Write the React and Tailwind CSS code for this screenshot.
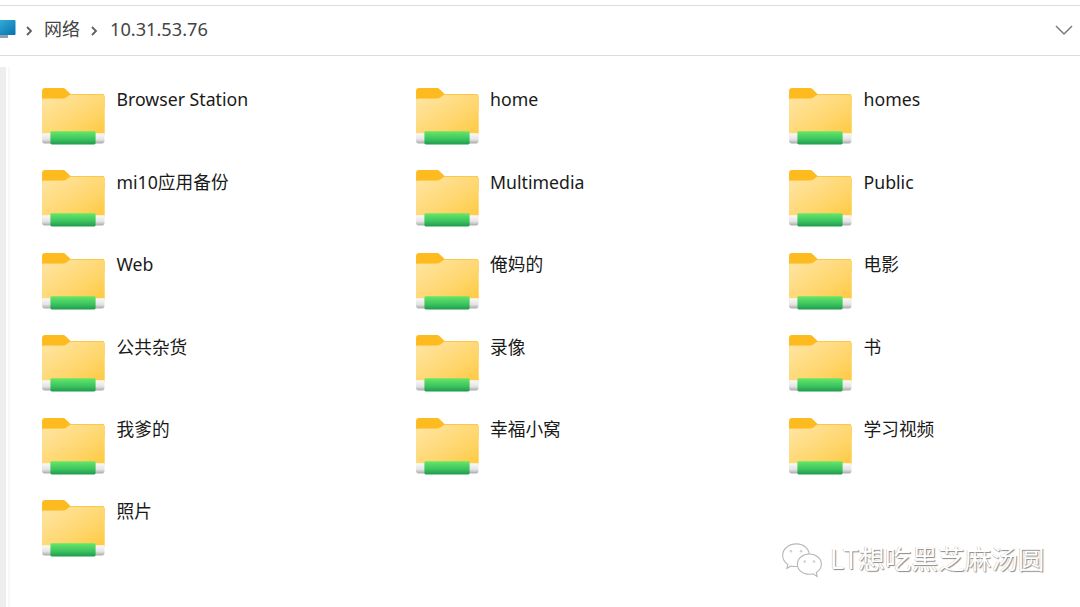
import React from 'react';

const folders = [
  'Browser Station', 'home', 'homes',
  'mi10应用备份', 'Multimedia', 'Public',
  'Web', '俺妈的', '电影',
  '公共杂货', '录像', '书',
  '我爹的', '幸福小窝', '学习视频',
  '照片',
];

const Folder = () => (
  <svg width="63" height="57" viewBox="0 0 64 58" className="shrink-0">
    <defs>
      <linearGradient id="body" x1="0" y1="0" x2="1" y2="1">
        <stop offset="0" stopColor="#ffe6a6" />
        <stop offset="0.65" stopColor="#ffd569" />
        <stop offset="1" stopColor="#fdc93f" />
      </linearGradient>
      <linearGradient id="green" x1="0" y1="0" x2="0" y2="1">
        <stop offset="0" stopColor="#66e868" />
        <stop offset="0.6" stopColor="#3cc35f" />
        <stop offset="1" stopColor="#1f9a4d" />
      </linearGradient>
      <linearGradient id="silver" x1="0" y1="0" x2="0" y2="1">
        <stop offset="0" stopColor="#fafafa" />
        <stop offset="0.6" stopColor="#e4e4e4" />
        <stop offset="1" stopColor="#a9a9a9" />
      </linearGradient>
    </defs>
    <path d="M0 3a3 3 0 0 1 3-3h18a4 4 0 0 1 3 1.200L29 6H61a2.500 2.500 0 0 1 2.500 2.500V20H0Z" fill="#fdbb1f" />
    <path d="M0 12a1.500 1.500 0 0 1 1.500-1.500H21c2.500 0 4-1 5.500-2.500L29 6H61a2.500 2.500 0 0 1 2.500 2.500V46H0Z" fill="#fdc84a" />
    <path d="M0 12.500a1.500 1.500 0 0 1 1.500-1.500H21c2.500 0 4-1 5.500-2.500L28.500 7H61a2.500 2.500 0 0 1 2.500 2.500V48H0Z" fill="url(#body)" />
    <path d="M0 46h63.500v8.500a2.500 2.500 0 0 1-2.500 2H2.500a2.500 2.500 0 0 1-2.500-2Z" fill="url(#silver)" />
    <rect x="8.500" y="44" width="46" height="13.500" rx="1.500" fill="url(#green)" />
  </svg>
);

const Chevron = () => (
  <svg width="8" height="12" viewBox="0 0 8 12" className="shrink-0">
    <path d="M2 2l4 4-4 4" fill="none" stroke="#5f5f5f" strokeWidth="1.800" />
  </svg>
);

const WeChat = () => (
  <svg width="42" height="35" viewBox="0 0 44 38" fill="#ffffff" stroke="#b8b8b8" strokeWidth="1.200">
    <path d="M16 1C7.500 1 1 6.500 1 13.500c0 4 2.200 7.400 5.700 9.700L5.500 27.500l5-2.600c1.500.4 3 .6 4.500.6 9 0 15-5.500 15-12S24.500 1 16 1Z" />
    <path d="M30 12c-7.500 0-13 4.900-13 11s5.500 11 13 11c1.400 0 2.800-.2 4-.6l4.500 3-1-4.400c3.400-2.100 5.500-5.300 5.500-9 0-6.100-5.500-11-13-11Z" />
    <circle cx="10" cy="9" r="1.400" fill="#d0d0d0" stroke="none" />
    <circle cx="21" cy="9" r="1.400" fill="#d0d0d0" stroke="none" />
    <circle cx="25" cy="20" r="1.400" fill="#d0d0d0" stroke="none" />
    <circle cx="35" cy="20" r="1.400" fill="#d0d0d0" stroke="none" />
  </svg>
);

export default function App() {
  return (
    <div className="relative w-[1080px] h-[607px] overflow-hidden bg-white text-[#1a1a1a] font-['Noto_Sans','Noto_Sans_CJK_SC',sans-serif]">
      <div className="mt-[5px] h-[51px] border-y border-[#dcdcdc] flex items-center">
        <svg width="16" height="18" viewBox="0 0 16 18" className="shrink-0 -mt-[3px]">
          <defs>
            <linearGradient id="screen" x1="0" y1="0" x2="1" y2="1">
              <stop offset="0" stopColor="#35b4d8" />
              <stop offset="1" stopColor="#0a6fb0" />
            </linearGradient>
          </defs>
          <rect x="-4" y="0" width="19.500" height="15" rx="1" fill="url(#screen)" />
          <rect x="0" y="15" width="8" height="3" fill="#8fa3ad" />
        </svg>
        <div className="ml-[9px]"><Chevron /></div>
        <span className="ml-[11px] -mt-[2px] text-[18px] text-[#444]">网络</span>
        <div className="ml-[10px]"><Chevron /></div>
        <span className="ml-[12px] -mt-[2px] text-[18.200px] text-[#444]">10.31.53.76</span>
        <svg width="18" height="11" viewBox="0 0 18 11" className="ml-auto mr-[7px]">
          <path d="M1 1l8 8 8-8" fill="none" stroke="#7a7a7a" strokeWidth="1.500" />
        </svg>
      </div>

      <div className="flex mt-[11px]">
        <div className="w-[6px] h-[540px] bg-[#eeeeee] shrink-0" />
        <div className="w-[2px] h-[540px] ml-[2px] bg-[#f8f8f8] shrink-0" />
        <div className="grid grid-cols-[373.500px_373.500px_1fr] auto-rows-[82.400px] ml-[32px] mt-[21px]">
          {folders.map((name) => (
            <div key={name} className="flex items-start">
              <Folder />
              <span className="ml-[11.500px] mt-[-0.600px] text-[17.700px] leading-[24px] whitespace-nowrap">{name}</span>
            </div>
          ))}
        </div>
      </div>

      <div className="absolute left-[781px] top-[543px] flex items-center">
        <WeChat />
        <span className="ml-[7px] -mt-[3px] text-[26.600px] leading-[36px] whitespace-nowrap text-white [text-shadow:1px_1px_1px_#8a8a8a,-0.5px_-0.5px_0.5px_#c0c0c0]">LT想吃黑芝麻汤圆</span>
      </div>
    </div>
  );
}
